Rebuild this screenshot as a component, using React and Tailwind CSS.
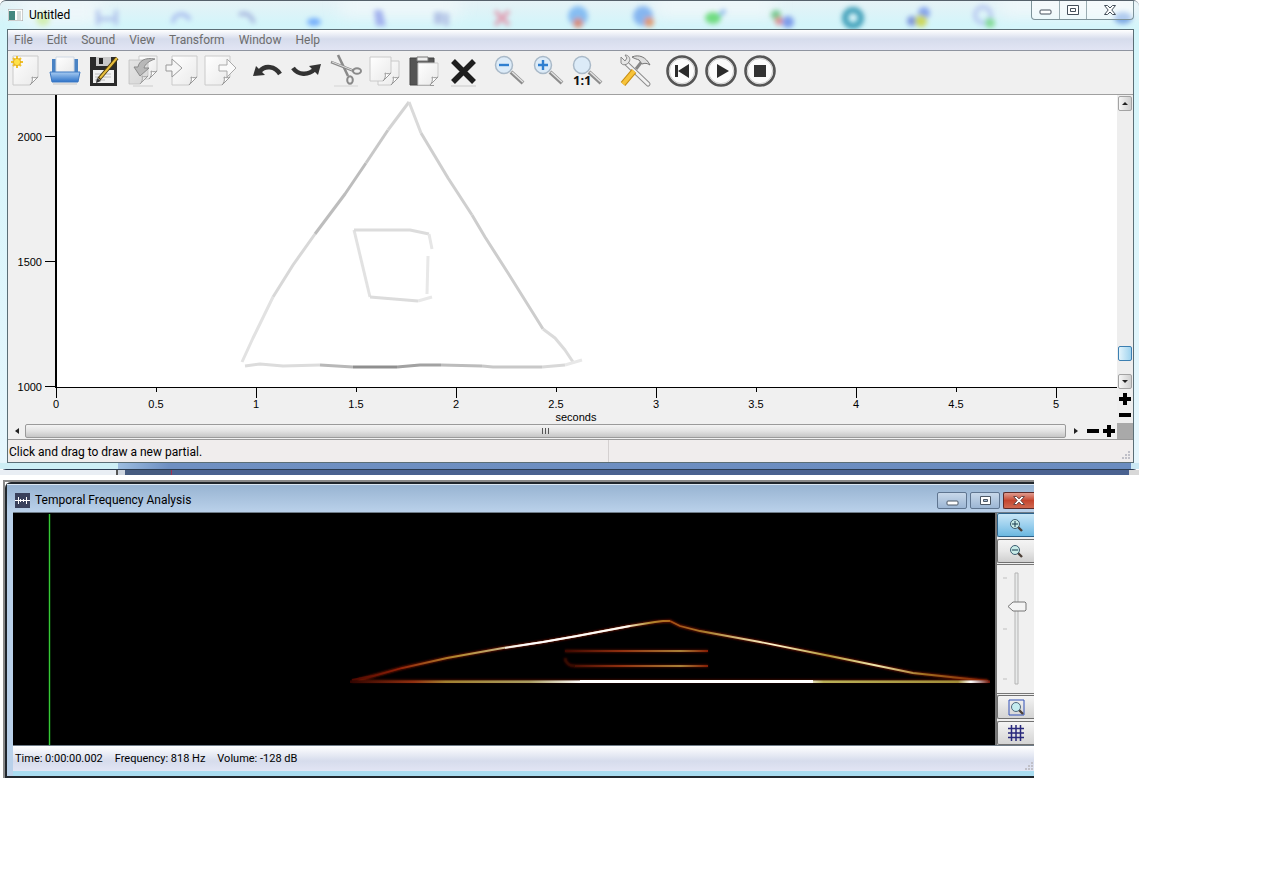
const menus = ['File', 'Edit', 'Sound', 'View', 'Transform', 'Window', 'Help'];

const partials = [
    { points: '234,267 245,243 265,202', color: '#e2e2e2' },
    { points: '265,202 285,170 307,139', color: '#d8d8d8' },
    { points: '307,139 337,99 358,68', color: '#bdbdbd' },
    { points: '358,68 380,35', color: '#c8c8c8' },
    { points: '380,35 401,7', color: '#d4d4d4' },
    { points: '401,7 413,38', color: '#dadada' },
    { points: '413,38 440,83 464,120', color: '#cfcfcf' },
    { points: '464,120 477,142 500,178 535,234', color: '#cdcdcd' },
    { points: '535,234 547,243 557,255 565,267', color: '#dbdbdb' },
    { points: '237,271 252,269 275,271 312,270', color: '#dcdcdc' },
    { points: '312,270 345,272', color: '#b8b8b8' },
    { points: '345,272 389,272', color: '#8f8f8f' },
    { points: '389,272 412,270 433,270', color: '#a2a2a2' },
    { points: '433,270 474,271', color: '#bcbcbc' },
    { points: '474,271 485,272 534,272', color: '#c8c8c8' },
    { points: '534,272 557,270', color: '#d8d8d8' },
    { points: '557,270 574,265', color: '#e8e8e8' },
    { points: '362,202 346,135', color: '#e2e2e2' },
    { points: '346,135 402,135 421,139', color: '#dcdcdc' },
    { points: '421,139 424,154', color: '#e6e6e6' },
    { points: '420,161 419,199', color: '#e8e8e8' },
    { points: '362,202 410,206', color: '#dcdcdc' },
    { points: '410,206 424,202', color: '#e8e8e8' },
];

const seconds = [0, 0.5, 1, 1.5, 2, 2.5, 3, 3.5, 4, 4.5, 5];
const hertz = [
    { label: 2000, y: 41 },
    { label: 1500, y: 166 },
    { label: 1000, y: 291 },
];

const Page = ({ x = 3, y = 1, w = 25, h = 29 }) => (
    <g>
        <path
            d={`M${x} ${y}h${w}v${h - 8}l-8 8h${8 - w}z`}
            fill="url(#paper)"
            stroke="#cacaca"
        />
        <path
            d={`M${x + w} ${y + h - 8}c-2 1-4 1-6 0c1 3 0 6-2 8z`}
            fill="#fff"
            stroke="#999"
        />
    </g>
);

const Lens = ({ children }) => (
    <g>
        <path d="M17 17l12 11" stroke="#8c8c8c" strokeWidth="4" />
        <path d="M18 17l11 10" stroke="#e4e4e4" strokeWidth="1.5" />
        <circle cx="10" cy="10" r="8.5" fill="#dcebf8" stroke="#a9b9c8" strokeWidth="1.5" />
        {children}
    </g>
);

const Round = ({ children }) => (
    <g>
        <circle cx="16" cy="16" r="14.5" fill="#fbfbfb" stroke="#555" strokeWidth="2.6" />
        <circle cx="16" cy="16" r="12.6" fill="none" stroke="#ccc" />
        {children}
    </g>
);

const toolGroups = [
    [
        {
            name: 'New',
            icon: (
                <g>
                    <Page />
                    <path d="M7 1v12M1 7h12M3 3l8 8M11 3l-8 8" stroke="#f0c12c" strokeWidth="2" />
                    <circle cx="7" cy="7" r="3.6" fill="#ffe24a" stroke="#e3ac1c" />
                </g>
            ),
        },
        {
            name: 'Open',
            icon: (
                <g>
                    <path d="M3 4h4v15H3zM25 4h4v15h-4z" fill="#4a83c4" />
                    <path d="M7 2h18v16H7z" fill="url(#paper)" stroke="#cfd8e4" />
                    <path d="M1 17h30l-2 10H3z" fill="url(#blueTray)" stroke="#3d78c2" />
                    <path d="M4 29h24" stroke="#c4c4c4" />
                </g>
            ),
        },
        {
            name: 'Save',
            icon: (
                <g>
                    <path d="M2 2h26l1 1v28H2z" fill="#2b2b2b" />
                    <path d="M8 2h15v9H8z" fill="#c9c9c9" />
                    <path d="M11 3h4v6h-4z" fill="#222" />
                    <path d="M5 15h21v13H5z" fill="#f1f1f1" />
                    <path d="M7 19h16M7 22h16M7 25h10" stroke="#bcbcbc" />
                    <path d="M11 24L29 3" stroke="#4b3b10" strokeWidth="4" />
                    <path d="M12 23L29 3" stroke="#e9bf3c" strokeWidth="2" />
                    <path d="M8 28l1-5 4 3z" fill="#333" />
                </g>
            ),
        },
        {
            name: 'Revert',
            icon: (
                <g>
                    <Page x={12} y={1} w={18} h={23} />
                    <Page x={2} y={5} w={19} h={24} />
                    <path d="M2 5h19v15l-8 9H2z" fill="#bbb" opacity="0.4" />
                    <path d="M28 4C18 2 12 6 11 12H7l6 9 9-8h-5c1-4 5-7 11-9z" fill="#b8b8b8" stroke="#8a8a8a" />
                    <path d="M6 31h20" stroke="#ccc" />
                </g>
            ),
        },
        {
            name: 'Import',
            icon: (
                <g>
                    <Page x={6} y={1} w={25} />
                    <path d="M0 10h6V4l10 9-10 9v-6H0z" fill="#f6f6f6" stroke="#999" />
                </g>
            ),
        },
        {
            name: 'Export',
            icon: (
                <g>
                    <Page x={0} y={1} w={25} />
                    <path d="M14 10h8V4l9 9-9 9v-6h-8z" fill="#fafafa" stroke="#aaa" />
                </g>
            ),
        },
    ],
    [
        {
            name: 'Undo',
            icon: (
                <g>
                    <path d="M8 16c5-6 15-5 20 3" fill="none" stroke="#333" strokeWidth="4.5" />
                    <path d="M4 11L1 21l12-1z" fill="#333" />
                </g>
            ),
        },
        {
            name: 'Redo',
            icon: (
                <g>
                    <path d="M2 13c5 7 15 8 22 1" fill="none" stroke="#333" strokeWidth="4.5" />
                    <path d="M18 11l12-2-3 11z" fill="#333" />
                </g>
            ),
        },
        {
            name: 'Cut',
            icon: (
                <g fill="none" stroke="#8a8a8a">
                    <path d="M1 7l23 9" strokeWidth="2.6" />
                    <path d="M8 0l10 21" strokeWidth="2.6" />
                    <path d="M2 7l20 8" stroke="#ddd" />
                    <ellipse cx="27" cy="16" rx="4" ry="2.8" strokeWidth="2" />
                    <ellipse cx="20" cy="25" rx="2.8" ry="3.8" strokeWidth="2" />
                    <path d="M4 31h24" stroke="#d4d4d4" />
                </g>
            ),
        },
        {
            name: 'Copy',
            icon: (
                <g>
                    <Page x={9} y={6} w={21} h={24} />
                    <Page x={1} y={2} w={21} h={24} />
                </g>
            ),
        },
        {
            name: 'Paste',
            icon: (
                <g>
                    <path d="M2 3h24v27H2z" fill="#555" stroke="#444" />
                    <path d="M9 2h11v4H9z" fill="#eee" stroke="#777" />
                    <path d="M10 8h20v22H10z" fill="#f0f0f0" />
                    <Page x={10} y={8} w={20} h={22} />
                </g>
            ),
        },
        {
            name: 'Delete',
            icon: (
                <g>
                    <path d="M6 6l21 21M27 6L6 27" stroke="#1e1e1e" strokeWidth="5.5" />
                    <path d="M4 31h25" stroke="#c8c8c8" />
                </g>
            ),
        },
    ],
    [
        {
            name: 'Zoom out',
            icon: (
                <Lens>
                    <path d="M5 10h10" stroke="#2f7fd0" strokeWidth="2.4" />
                </Lens>
            ),
        },
        {
            name: 'Zoom in',
            icon: (
                <Lens>
                    <path d="M5 10h10M10 5v10" stroke="#2f7fd0" strokeWidth="2.4" />
                </Lens>
            ),
        },
        {
            name: 'Zoom to actual size',
            icon: (
                <g>
                    <Lens />
                    <text x="1" y="30" fontFamily="'Noto Sans', sans-serif" fontWeight="700" fontSize="13" fill="#111">
                        1:1
                    </text>
                </g>
            ),
        },
    ],
    [
        {
            name: 'Preferences',
            icon: (
                <g>
                    <path d="M8 9l21 20" stroke="#8d8d8d" strokeWidth="5" strokeLinecap="round" />
                    <path d="M8 9l21 20" stroke="#f2f2f2" strokeWidth="3" strokeLinecap="round" />
                    <path d="M2 2l4 4 2-3-2-3c4 0 6 4 4 7s-6 4-8 1z" fill="#e5e5e5" stroke="#888" />
                    <path d="M17 14l7-9" stroke="#888" strokeWidth="3" />
                    <path d="M13 2c7-3 14 0 18 8-3-2-5-2-8-1l-3-4c-2-1-4-1-7-3z" fill="#ddd" stroke="#777" />
                    <path d="M15 16L4 29" stroke="#c78e13" strokeWidth="6" />
                    <path d="M15 16L4 29" stroke="#f7c33a" strokeWidth="4" />
                </g>
            ),
        },
    ],
    [
        {
            name: 'Rewind',
            icon: (
                <Round>
                    <path d="M9 10h3v12H9zM23 9v14l-11-7z" fill="#2b2b2b" />
                </Round>
            ),
        },
        {
            name: 'Play',
            icon: (
                <Round>
                    <path d="M12 9l12 7-12 7z" fill="#2b2b2b" />
                </Round>
            ),
        },
        {
            name: 'Stop',
            icon: (
                <Round>
                    <path d="M10 10h12v12H10z" fill="#333" />
                </Round>
            ),
        },
    ],
];

// Aero glass: blurred icons of the application behind the title bar
const GlassBackdrop = () => (
    <svg className="absolute inset-x-0 top-px h-7 w-full" aria-hidden="true">
        <defs>
            <filter id="glass" x="-20%" y="-20%" width="140%" height="140%">
                <feGaussianBlur stdDeviation="2.4" />
            </filter>
            <filter id="mist" x="-20%" y="-60%" width="140%" height="220%">
                <feGaussianBlur stdDeviation="8" />
            </filter>
        </defs>
        <g filter="url(#mist)" fill="#f2f8fb" opacity="0.8">
            <rect x="20" y="-4" width="80" height="30" />
            <rect x="340" y="-6" width="120" height="22" />
            <rect x="655" y="-6" width="120" height="22" />
            <rect x="1000" y="-6" width="140" height="22" />
        </g>
        <g filter="url(#glass)" fill="none" strokeWidth="4">
            <circle cx="43" cy="18" r="7" fill="#d3efb4" />
            <path d="M98 9v15M116 9v15M98 18h18" stroke="#b4c6ec" />
            <path d="M173 22c0-10 12-12 17-3" stroke="#a9bdee" />
            <path d="M239 14c6-4 12 0 15 8" stroke="#a6b6de" />
            <ellipse cx="314" cy="21" rx="7" ry="4" fill="#74aefc" />
            <path d="M374 9h8l4 16h-10z" fill="#a3b2ee" />
            <path d="M434 11h9v12h-9zM444 12h5v13h-5z" fill="#b4c4e6" />
            <path d="M495 10l14 14M509 10l-14 14" stroke="#e0a0b4" />
            <circle cx="578" cy="15" r="10" fill="#86bdf2" />
            <circle cx="578" cy="22" r="5" fill="#d88c78" />
            <circle cx="643" cy="15" r="10" fill="#86b6f0" />
            <circle cx="649" cy="21" r="5" fill="#e09a70" />
            <ellipse cx="713" cy="17" rx="8" ry="6" fill="#6fdc80" />
            <path d="M720 14l5-5" stroke="#8ab6e8" />
            <circle cx="776" cy="14" r="5" fill="#78c890" />
            <circle cx="779" cy="20" r="4" fill="#e08c90" />
            <circle cx="788" cy="21" r="6" fill="#7d9cea" />
            <circle cx="853" cy="17" r="8" stroke="#3e9eb8" strokeWidth="6" />
            <circle cx="924" cy="12" r="6" fill="#86a4ec" />
            <circle cx="912" cy="20" r="5" fill="#7b94dc" />
            <circle cx="921" cy="20" r="6" fill="#ccd85c" />
            <circle cx="983" cy="14" r="8" stroke="#b8c8f0" />
            <circle cx="990" cy="22" r="5" fill="#84dc98" />
            <ellipse cx="1123" cy="17" rx="9" ry="6" fill="#7ca8e4" />
        </g>
    </svg>
);

const Toolbar = () => (
    <div className="flex h-[44px] items-center gap-[15px] border-b border-[#a0a0a0] bg-[#f0f0f0] pl-[2px]">
        <svg className="absolute h-0 w-0" aria-hidden="true">
            <defs>
                <linearGradient id="paper" x1="0" y1="0" x2="1" y2="1">
                    <stop offset="0" stopColor="#fff" />
                    <stop offset="1" stopColor="#e9e9e9" />
                </linearGradient>
                <linearGradient id="blueTray" x1="0" y1="0" x2="0" y2="1">
                    <stop offset="0" stopColor="#a8ccf2" />
                    <stop offset="1" stopColor="#2d72c8" />
                </linearGradient>
            </defs>
        </svg>
        {toolGroups.map((group) => (
            <div key={group[0].name} className="flex shrink-0 gap-[7px]">
                {group.map((tool) => (
                    <button key={tool.name} type="button" aria-label={tool.name} className="-mt-[3px] h-8 w-8">
                        <svg viewBox="0 0 32 32" className="h-8 w-8 overflow-visible" fill="none">
                            {tool.icon}
                        </svg>
                    </button>
                ))}
            </div>
        ))}
    </div>
);

const PartialChart = () => (
    <svg className="h-[328px] min-w-0 flex-1 bg-[#f0f0f0]" role="img" aria-label="Partials">
        <rect x="49" y="0" width="100%" height="292" fill="#fff" />
        <g fill="none" strokeWidth="3" strokeLinejoin="round">
            {partials.map((p) => (
                <polyline key={p.points} points={p.points} stroke={p.color} />
            ))}
        </g>
        <rect x="47" y="0" width="2" height="292" fill="#000" />
        <rect x="47" y="292" width="100%" height="1" fill="#000" />
        <g fontFamily="'Liberation Sans', Arial, sans-serif" fontSize="11" fill="#000">
            {hertz.map((h) => (
                <g key={h.label}>
                    <rect x="37" y={h.y} width="10" height="1" />
                    <text x="34" y={h.y + 5} textAnchor="end">{h.label}</text>
                </g>
            ))}
            {seconds.map((s) => (
                <g key={s}>
                    <rect x={48 + s * 200} y="293" width="1" height={s % 1 ? 4 : 10} />
                    <text x={48 + s * 200} y="313" textAnchor="middle">{s}</text>
                </g>
            ))}
            <text x="568" y="326" textAnchor="middle">seconds</text>
        </g>
    </svg>
);

const Sign = ({ plus, label }) => (
    <button type="button" aria-label={label} className="flex h-4 w-4 shrink-0 items-center justify-center">
        <svg viewBox="0 0 12 12" className="h-3 w-3">
            <path d={plus ? 'M0 6h12M6 0v12' : 'M0 6h12'} stroke="#000" strokeWidth="4" />
        </svg>
    </button>
);

const VerticalScroll = () => (
    <div className="flex w-4 shrink-0 flex-col items-center bg-[#eee]">
        <button type="button" aria-label="Scroll up" className="mt-px flex h-[15px] w-[14px] items-center justify-center rounded-xs border border-[#a3a3a3] bg-linear-to-r from-[#f6f6f6] to-[#cfcfcf]">
            <svg viewBox="0 0 6 3" className="h-[3px] w-[6px]"><path d="M3 0l3 3H0z" fill="#222" /></svg>
        </button>
        <div className="flex-1" />
        <div className="h-[15px] w-[14px] rounded-xs border border-[#3c7fb1] bg-linear-to-r from-[#e3f4fc] to-[#9fd3ee]" />
        <button type="button" aria-label="Scroll down" className="mt-[13px] mb-0.5 flex h-[15px] w-[14px] items-center justify-center rounded-xs border border-[#a3a3a3] bg-linear-to-r from-[#f6f6f6] to-[#cfcfcf]">
            <svg viewBox="0 0 6 3" className="h-[3px] w-[6px]"><path d="M0 0h6L3 3z" fill="#222" /></svg>
        </button>
        <Sign plus label="Zoom in vertically" />
        <Sign label="Zoom out vertically" />
    </div>
);

const HorizontalScroll = () => (
    <div className="flex h-4 items-center bg-[#f0f0f0]">
        <button type="button" aria-label="Scroll left" className="flex h-4 w-[17px] items-center justify-center">
            <svg viewBox="0 0 4 6" className="h-[6px] w-1"><path d="M4 0v6L0 3z" fill="#222" /></svg>
        </button>
        <div className="flex h-[14px] flex-1 items-center justify-center rounded-xs border border-[#9a9a9a] bg-linear-to-b from-[#f4f4f4] via-[#e2e2e2] to-[#c6c6c6]">
            <svg viewBox="0 0 8 6" className="h-[6px] w-2"><path d="M0 0h1v6H0zM3 0h1v6H3zM6 0h1v6H6z" fill="#555" /></svg>
        </div>
        <button type="button" aria-label="Scroll right" className="flex h-4 w-[19px] items-center justify-center">
            <svg viewBox="0 0 4 6" className="h-[6px] w-1"><path d="M0 0v6l4-3z" fill="#222" /></svg>
        </button>
        <Sign label="Zoom out horizontally" />
        <Sign plus label="Zoom in horizontally" />
        <div className="h-4 w-4 shrink-0 bg-[#a9a9a9]" />
    </div>
);

const Grip = () => (
    <svg viewBox="0 0 9 9" className="h-[9px] w-[9px]" aria-hidden="true">
        <path d="M6 0h2v2H6zM3 3h2v2H3zM6 3h2v2H6zM0 6h2v2H0zM3 6h2v2H3zM6 6h2v2H6z" fill="#c0c0c8" />
    </svg>
);

const EditorWindow = () => (
    <section className="relative mr-[135px] overflow-hidden">
        <div className="rounded-t-md rounded-b-md border-t border-b border-t-[#55606a] border-b-[#2b3c52] bg-linear-to-b from-[#e6f2f6] via-[#d3f5fa] via-5% to-[#e6f6fd]">
            <GlassBackdrop />
            <header className="relative flex h-7 items-center gap-[6px] pr-[5px] pl-2">
                <svg viewBox="0 0 15 12" className="h-3 w-[15px]" aria-hidden="true">
                    <path d="M0 0h15v12H0z" fill="#fff" stroke="#999" />
                    <path d="M1 2h6v9H1z" fill="#43877f" />
                    <path d="M9 2h4v9H9z" fill="#d5dcdc" />
                </svg>
                <h1 className="flex-1 font-[Roboto,sans-serif] text-[12px] leading-4 text-black">Untitled</h1>
                <div className="flex h-[19px] self-start overflow-hidden rounded-b-sm border border-t-0 border-[#7d9299] bg-white/40">
                    <button type="button" aria-label="Minimize" className="flex w-7 items-center justify-center border-r border-[#9aacb2]">
                        <svg viewBox="0 0 13 6" className="mt-1 h-[6px] w-[13px]"><rect x="1" y="1" width="11" height="4" rx="1" fill="#fff" stroke="#444f5a" /></svg>
                    </button>
                    <button type="button" aria-label="Maximize" className="flex w-[27px] items-center justify-center border-r border-[#9aacb2]">
                        <svg viewBox="0 0 12 10" className="h-[10px] w-3"><path d="M.5.5h11v9H.5z" fill="#fff" stroke="#444f5a" /><path d="M3.500 3.500h5v3h-5z" fill="#fff" stroke="#444f5a" /></svg>
                    </button>
                    <button type="button" aria-label="Close" className="flex w-[46px] items-center justify-center">
                        <svg viewBox="0 0 12 10" className="h-[10px] w-3"><path d="M.5.5h3L6 3 8.500.5h3L7.800 5l3.700 4.500h-3L6 7 3.500 9.500h-3L4.200 5z" fill="#fff" stroke="#444f5a" /></svg>
                    </button>
                </div>
            </header>
            <div className="relative mr-[5px] ml-[7px] border border-[#5b6e76] bg-[#f0f0f0]">
                <nav className="flex h-[21px] items-center gap-[14px] border-b border-[#8f94a0] bg-linear-to-b from-white via-[#d6dcec] via-45% to-[#e2e5f4] pl-[6px] font-[Roboto,sans-serif] text-[12px] leading-4 text-[#6d6d6d]">
                    {menus.map((menu) => (
                        <button key={menu} type="button">{menu}</button>
                    ))}
                </nav>
                <Toolbar />
                <div className="flex">
                    <PartialChart />
                    <VerticalScroll />
                </div>
                <HorizontalScroll />
                <footer className="flex h-[23px] border-t border-[#9a9a9a] bg-[#f0eded] font-[Roboto,sans-serif] text-[12px] leading-6 text-black">
                    <p className="w-[601px] border-r border-[#d4d0d0] pl-px">Click and drag to draw a new partial.</p>
                    <div className="flex flex-1 items-end justify-end p-0.5"><Grip /></div>
                </footer>
            </div>
            <div className="flex h-[6px]">
                <div className="w-[118px] bg-[#cdeef5]" />
                <div className="flex-1 bg-linear-to-r from-[#9dbde0] via-[#6f90c2] via-5% to-[#6a8cc0]" />
                <div className="w-2 bg-[#cbe8f4]" />
            </div>
        </div>
        <div className="flex h-[5px]">
            <div className="w-[116px] bg-[#e9eef4]" />
            <div className="w-[2px] bg-[#555]" />
            <div className="w-[7px] bg-[#cfd6e0]" />
            <div className="w-[46px] bg-[#465b80]" />
            <div className="w-px bg-[#a03050]" />
            <div className="flex-1 bg-[#4a6290]" />
            <div className="w-[10px] bg-[#d8d8d8]" />
        </div>
    </section>
);

const Spectrogram = () => (
    <svg className="h-[232px] min-w-0 flex-1 bg-black" role="img" aria-label="Spectrogram">
        <defs>
            <linearGradient id="rise" gradientUnits="userSpaceOnUse" x1="337" y1="0" x2="660" y2="0">
                <stop offset="0" stopColor="#4a0800" />
                <stop offset="0.15" stopColor="#902008" />
                <stop offset="0.33" stopColor="#b08a30" />
                <stop offset="0.45" stopColor="#c0a870" />
                <stop offset="0.55" stopColor="#fff" />
                <stop offset="0.85" stopColor="#fff3d8" />
                <stop offset="0.93" stopColor="#b08a30" />
                <stop offset="1" stopColor="#b06018" />
            </linearGradient>
            <linearGradient id="fall" gradientUnits="userSpaceOnUse" x1="655" y1="0" x2="975" y2="0">
                <stop offset="0" stopColor="#a04810" />
                <stop offset="0.12" stopColor="#a88030" />
                <stop offset="0.33" stopColor="#fff8d0" />
                <stop offset="0.5" stopColor="#b09838" />
                <stop offset="0.65" stopColor="#f0e8b0" />
                <stop offset="0.8" stopColor="#a07020" />
                <stop offset="1" stopColor="#801800" />
            </linearGradient>
            <linearGradient id="base" gradientUnits="userSpaceOnUse" x1="337" y1="0" x2="977" y2="0">
                <stop offset="0" stopColor="#300400" />
                <stop offset="0.1" stopColor="#903010" />
                <stop offset="0.15" stopColor="#a08030" />
                <stop offset="0.28" stopColor="#a89c60" />
                <stop offset="0.36" stopColor="#fff" />
                <stop offset="0.71" stopColor="#fff" />
                <stop offset="0.74" stopColor="#b8b058" />
                <stop offset="0.95" stopColor="#a08c38" />
                <stop offset="0.97" stopColor="#fff" />
                <stop offset="0.985" stopColor="#b09090" />
                <stop offset="1" stopColor="#701000" />
            </linearGradient>
            <linearGradient id="inner" gradientUnits="userSpaceOnUse" x1="550" y1="0" x2="697" y2="0">
                <stop offset="0" stopColor="#3a0600" />
                <stop offset="0.4" stopColor="#903010" />
                <stop offset="0.8" stopColor="#a88038" />
                <stop offset="1" stopColor="#801400" />
            </linearGradient>
            <filter id="halo" filterUnits="userSpaceOnUse" x="320" y="90" width="680" height="100">
                <feGaussianBlur stdDeviation="1" />
            </filter>
        </defs>
        <rect x="35" y="1" width="3" height="232" fill="#062c06" />
        <rect x="36" y="1" width="1" height="232" fill="#37c837" />
        <g fill="none" stroke="#8c1c00" strokeWidth="3" filter="url(#halo)">
            <path d="M345 167L360 163L389 155L434 145L490 135L530 129L564 123L617 113L642 109L657 108L667 113L687 118L747 129L817 143L900 160L975 168" opacity="0.8" />
            <path d="M339 168H975" opacity="0.5" />
            <path d="M552 138H695M552 145C553 151 556 153 562 153H695" opacity="0.5" />
        </g>
        <g fill="none" strokeWidth="1.8">
            <path d="M339 167L360 163L389 155L434 145L490 135L530 129L564 123L617 113L642 109L650 108L657 108" stroke="url(#rise)" />
            <path d="M657 108L667 113L687 118L747 129L817 143L900 160L975 168" stroke="url(#fall)" />
            <path d="M552 138H695M562 153H695" stroke="url(#inner)" />
        </g>
        <path d="M492 135L530 129L564 123L617 113" fill="none" stroke="#fff" strokeWidth="2" opacity="0.7" />
        <rect x="337" y="167" width="640" height="3" fill="url(#base)" opacity="0.6" />
        <rect x="337" y="168" width="640" height="2" fill="url(#base)" />
        <rect x="567" y="167" width="233" height="3" fill="#fff" />
    </svg>
);

const SmallLens = ({ plus }) => (
    <svg viewBox="0 0 15 15" className="h-[15px] w-[15px]" fill="none">
        <path d="M8 8l5 5" stroke="#4d4038" strokeWidth="2.400" />
        <circle cx="6" cy="6" r="4.500" fill="#c8ece8" stroke="#3c5c70" />
        <path d={plus ? 'M3 6h6M6 3v6' : 'M3 6h6'} stroke="#14384c" />
    </svg>
);

const AnalysisTools = () => (
    <aside className="flex w-[39px] shrink-0 flex-col border-l-2 border-[#777] bg-[#f0f0f0]">
        <button type="button" aria-label="Zoom in" className="flex h-6 items-center justify-center rounded-l-xs border border-r-0 border-[#2c628b] bg-linear-to-b from-[#c8e6f6] via-[#9cd0ee] to-[#6cb8e0]">
            <SmallLens plus />
        </button>
        <button type="button" aria-label="Zoom out" className="mt-0.5 flex h-6 items-center justify-center rounded-l-xs border border-r-0 border-[#707070] bg-linear-to-b from-[#f4f4f4] via-[#e8e8e8] to-[#cfcfcf]">
            <SmallLens />
        </button>
        <div className="relative mt-px h-[130px] border-y border-[#777]">
            <svg className="h-full w-full" viewBox="0 0 37 128" aria-hidden="true">
                <path d="M6 13h4M6 64h4M6 114h4" stroke="#c0c0c0" />
                <path d="M18 8h3v111h-3z" fill="#e8eaea" stroke="#b4b4b4" />
                <path d="M16 37h12l1 1v7l-1 1H16l-5-4.500z" fill="#f4f4f4" stroke="#777" />
            </svg>
            <input type="range" aria-label="Zoom level" defaultValue="70" className="absolute inset-0 h-full w-full opacity-0 [writing-mode:vertical-lr]" />
        </div>
        <button type="button" aria-label="Zoom to fit" className="mt-px flex h-6 items-center justify-center rounded-l-xs border border-r-0 border-[#707070] bg-linear-to-b from-[#f4f4f4] to-[#d4d4d4]">
            <svg viewBox="0 0 17 17" className="h-[17px] w-[17px]" fill="none">
                <path d="M1 1h15v15H1z" stroke="#3050b8" />
                <path d="M10 10l5 5" stroke="#4d4038" strokeWidth="2.400" />
                <circle cx="8" cy="8" r="4.500" fill="#c4ecf0" stroke="#50687c" />
            </svg>
        </button>
        <button type="button" aria-label="Toggle grid" className="mt-0.5 flex h-6 items-center justify-center rounded-l-xs border border-r-0 border-[#707070] bg-linear-to-b from-[#f4f4f4] to-[#d4d4d4]">
            <svg viewBox="0 0 16 16" className="h-4 w-4">
                <path d="M3.500 0v16M8 0v16M12.500 0v16M0 3.500h16M0 8h16M0 12.500h16" stroke="#28287c" strokeWidth="1.500" />
            </svg>
        </button>
    </aside>
);

const AnalysisWindow = () => (
    <section className="mt-[5px] mr-[240px] ml-[3px] border-t-2 border-l-2 border-[#8a8a8a]">
        <div className="rounded-tl-md border-t-2 border-b-2 border-l-2 border-[#20262c] bg-[#b9d1ea] pl-[6px]">
            <header className="-ml-[6px] flex h-7 items-center gap-[5px] border-t border-[#dce8f4] bg-linear-to-b from-[#98b4d2] to-[#bad1ea] pt-[3px] pl-2">
                <svg viewBox="0 0 15 15" className="h-[15px] w-[15px]" aria-hidden="true">
                    <path d="M0 0h15v15H0z" fill="#39415c" />
                    <path d="M0 7.500h15M3.500 4v7M5.500 6v3M8.500 6v3M11.500 4v7" stroke="#fff" fill="none" />
                </svg>
                <h2 className="flex-1 font-[Roboto,sans-serif] text-[12px] leading-4 text-black">Temporal Frequency Analysis</h2>
                <div className="mt-px flex gap-[3px]">
                    <button type="button" aria-label="Minimize" className="flex h-[17px] w-[30px] items-center justify-center rounded-xs border border-[#5f7590] bg-linear-to-b from-[#c8d8ea] to-[#9cb6d4]">
                        <svg viewBox="0 0 13 6" className="mt-1 h-[6px] w-[13px]"><rect x="1" y="1" width="11" height="4" rx="1" fill="#fff" stroke="#4c5866" /></svg>
                    </button>
                    <button type="button" aria-label="Maximize" className="flex h-[17px] w-[30px] items-center justify-center rounded-xs border border-[#5f7590] bg-linear-to-b from-[#c8d8ea] to-[#9cb6d4]">
                        <svg viewBox="0 0 11 9" className="h-[9px] w-[11px]"><path d="M.5.5h10v8H.5z" fill="#fff" stroke="#4c5866" /><path d="M3.500 3.500h4v2h-4z" fill="#a8bcd4" stroke="#4c5866" /></svg>
                    </button>
                    <button type="button" aria-label="Close" className="flex h-[17px] w-[31px] items-center justify-center rounded-l-xs border border-r-0 border-[#5c2a28] bg-linear-to-b from-[#e09c90] via-[#c4452e] to-[#d06850]">
                        <svg viewBox="0 0 12 9" className="h-[9px] w-3"><path d="M.5.5h3L6 2.800 8.500.5h3L7.800 4.500l3.700 4h-3L6 6.200 3.500 8.500h-3L4.200 4.500z" fill="#fff" stroke="#6a4848" /></svg>
                    </button>
                </div>
            </header>
            <div className="flex border-t border-b border-[#6f7c88]">
                <Spectrogram />
                <AnalysisTools />
            </div>
            <footer className="flex h-[25px] items-center gap-3 bg-linear-to-b from-white via-[#d6dcec] via-60% to-[#e2e5f4] pl-0.5 font-[Roboto,sans-serif] text-[11px] leading-4 text-black">
                <p>Time: 0:00:00.002</p>
                <p>Frequency: 818 Hz</p>
                <p className="flex-1">Volume: -128 dB</p>
                <div className="self-end"><Grip /></div>
            </footer>
            <div className="h-[5px] bg-[#a9dcf0]" />
        </div>
    </section>
);

const App = () => (
    <main className="min-h-screen bg-white">
        <EditorWindow />
        <AnalysisWindow />
    </main>
);

export default App;
